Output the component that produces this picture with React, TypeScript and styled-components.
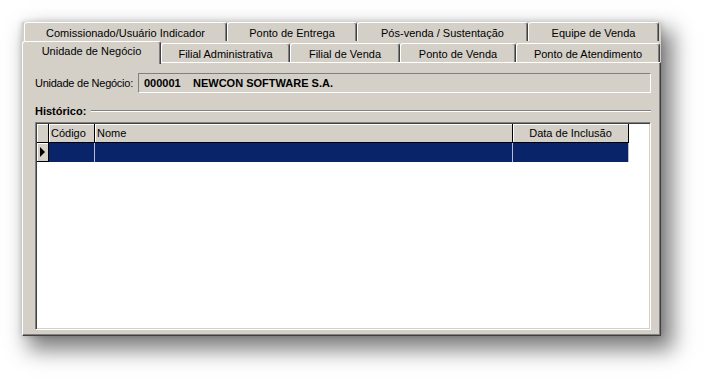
import styled, { createGlobalStyle } from 'styled-components';

const face = '#d4d0c8';
const shadow = '#808080';
const dark = '#404040';
const navy = '#0a246a';

const GlobalStyle = createGlobalStyle`
  html, body {
    margin: 0;
    background: #ffffff;
  }
  body {
    font-family: "Liberation Sans", Arial, sans-serif;
    font-size: 11px;
    color: #000;
  }
`;

type TabProps = { $w: number; $active?: boolean };

const topTabs = [
  { label: 'Comissionado/Usuário Indicador', w: 203 },
  { label: 'Ponto de Entrega', w: 130 },
  { label: 'Pós-venda / Sustentação', w: 171 },
  { label: 'Equipe de Venda', w: 131 },
];

const bottomTabs = [
  { label: 'Unidade de Negócio', w: 139, active: true },
  { label: 'Filial Administrativa', w: 129 },
  { label: 'Filial de Venda', w: 110 },
  { label: 'Ponto de Venda', w: 116 },
  { label: 'Ponto de Atendimento', w: 144 },
];

const columns = [
  { label: 'Código', w: 46 },
  { label: 'Nome', w: 418 },
  { label: 'Data de Inclusão', w: 116, center: true },
];

const App = () => {
  return (
    <>
      <GlobalStyle />
      <Page>
        <Window>
          <TabRow className="back">
            {topTabs.map((t) => (
              <Tab key={t.label} $w={t.w}>
                {t.label}
              </Tab>
            ))}
          </TabRow>
          <TabRow className="front">
            {bottomTabs.map((t) => (
              <Tab key={t.label} $w={t.w} $active={t.active}>
                {t.label}
              </Tab>
            ))}
          </TabRow>
          <Panel>
            <FieldRow>
              <Label>Unidade de Negócio:</Label>
              <Field>
                <Code>000001</Code>
                <span>NEWCON SOFTWARE S.A.</span>
              </Field>
            </FieldRow>
            <GroupTitle>
              <b>Histórico:</b>
              <Etch />
            </GroupTitle>
            <Grid>
              <GridRow>
                <Indicator />
                {columns.map((c) => (
                  <HeaderCell key={c.label} $w={c.w} $center={c.center}>
                    {c.label}
                  </HeaderCell>
                ))}
              </GridRow>
              <GridRow>
                <Indicator>
                  <Arrow />
                </Indicator>
                {columns.map((c) => (
                  <DataCell key={c.label} $w={c.w} />
                ))}
              </GridRow>
            </Grid>
          </Panel>
        </Window>
      </Page>
    </>
  );
};
export default App;

const Page = styled.div`
  box-sizing: border-box;
  height: 378px;
  padding: 22px 0 0 22px;
`;

const Window = styled.div`
  width: 639px;
  height: 314px;
  display: flex;
  flex-direction: column;
  background: ${face};
  box-shadow: 9px 11px 20px 3px rgba(0, 0, 0, 0.5), 0 0 6px rgba(0, 0, 0, 0.18);
`;

const TabRow = styled.div`
  display: flex;
  align-items: flex-end;
  &.back {
    height: 19px;
    padding-left: 2px;
  }
  &.front {
    height: 21px;
    position: relative;
    z-index: 1;
  }
`;

const Tab = styled.div<TabProps>`
  box-sizing: border-box;
  width: ${(p) => p.$w}px;
  height: ${(p) => (p.$active ? 23 : 19)}px;
  margin-bottom: ${(p) => (p.$active ? -2 : 0)}px;
  padding-top: ${(p) => (p.$active ? 3 : 4)}px;
  text-align: center;
  white-space: nowrap;
  background: ${face};
  border-top: 1px solid #fff;
  border-left: 1px solid #fff;
  border-right: 1px solid ${dark};
  box-shadow: inset -1px 0 ${shadow};
  border-radius: 3px 3px 0 0;
  position: relative;
  z-index: ${(p) => (p.$active ? 2 : 1)};
`;

const Panel = styled.div`
  flex: 1;
  display: flex;
  flex-direction: column;
  padding: 10px 9px 5px 12px;
  border-top: 1px solid #fff;
  border-left: 1px solid #fff;
  border-right: 1px solid ${dark};
  border-bottom: 1px solid ${dark};
  box-shadow: inset -1px -1px ${shadow};
`;

const FieldRow = styled.div`
  display: flex;
  align-items: center;
  gap: 5px;
  height: 20px;
`;

const Label = styled.span`
  white-space: nowrap;
  letter-spacing: -0.25px;
`;

const Field = styled.div`
  box-sizing: border-box;
  flex: 1;
  height: 20px;
  display: flex;
  align-items: center;
  padding-left: 5px;
  font-weight: bold;
  border-top: 1px solid ${shadow};
  border-left: 1px solid ${shadow};
  border-right: 1px solid #fff;
  border-bottom: 1px solid #fff;
`;

const Code = styled.span`
  width: 49px;
`;

const GroupTitle = styled.div`
  display: flex;
  align-items: center;
  gap: 5px;
  margin-top: 10px;
  height: 16px;
`;

const Etch = styled.div`
  flex: 1;
  border-top: 1px solid ${shadow};
  border-bottom: 1px solid #fff;
`;

const Grid = styled.div`
  flex: 1;
  margin-top: 3px;
  background: #fff;
  border-top: 1px solid ${shadow};
  border-left: 1px solid ${shadow};
  border-right: 1px solid #fff;
  border-bottom: 1px solid #fff;
  box-shadow: inset 1px 1px ${dark}, inset -1px -1px ${face};
  padding: 1px;
`;

const GridRow = styled.div`
  display: flex;
  height: 19px;
`;

const Indicator = styled.div`
  box-sizing: border-box;
  width: 12px;
  background: ${face};
  border-right: 1px solid #000;
  border-bottom: 1px solid #000;
  box-shadow: inset 1px 1px #fff;
  display: flex;
  align-items: center;
  padding-left: 3px;
`;

const Arrow = styled.div`
  width: 0;
  height: 0;
  border-top: 5px solid transparent;
  border-bottom: 5px solid transparent;
  border-left: 5px solid #000;
`;

const HeaderCell = styled.div<{ $w: number; $center?: boolean }>`
  box-sizing: border-box;
  width: ${(p) => p.$w}px;
  background: ${face};
  border-right: 1px solid #000;
  border-bottom: 1px solid #000;
  box-shadow: inset 1px 1px #fff;
  padding: 3px 2px 0;
  white-space: nowrap;
  text-align: ${(p) => (p.$center ? 'center' : 'left')};
`;

const DataCell = styled.div<{ $w: number }>`
  box-sizing: border-box;
  width: ${(p) => p.$w}px;
  background: ${navy};
  border-right: 1px solid #b8bcd0;
`;
